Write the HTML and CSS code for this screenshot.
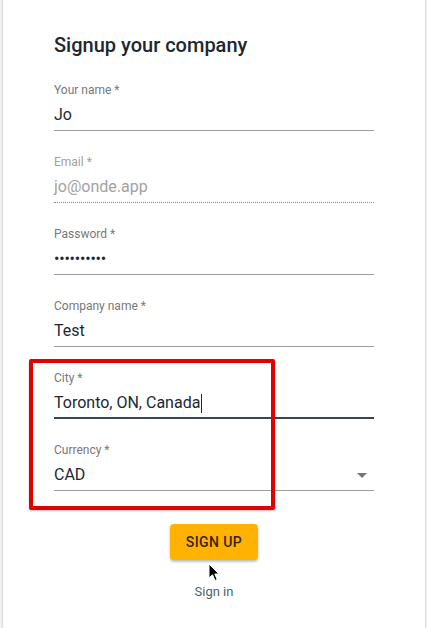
FILE: index.html
```html
<!DOCTYPE html>
<html>
<head>
<meta charset="utf-8">
<link rel="stylesheet" href="styles.css">
</head>
<body>
<div class="card">
  <form class="form">
    <h1 class="title">Signup your company</h1>
    <div class="field">
      <div class="label">Your name *</div>
      <div class="input">Jo</div>
    </div>
    <div class="field field-disabled">
      <div class="label">Email *</div>
      <div class="input">jo@onde.app</div>
    </div>
    <div class="field">
      <div class="label">Password *</div>
      <div class="input input-pass">••••••••••</div>
    </div>
    <div class="field">
      <div class="label">Company name *</div>
      <div class="input">Test</div>
    </div>
    <div class="field field-focused">
      <div class="label">City *</div>
      <div class="input">Toronto, ON, Canada<span class="caret"></span></div>
    </div>
    <div class="field">
      <div class="label">Currency *</div>
      <div class="input input-select">CAD<span class="arrow"></span></div>
    </div>
    <div class="actions">
      <button type="button" class="btn">SIGN UP</button>
      <a class="link">Sign in</a>
    </div>
  </form>
  <div class="highlight"></div>
  <svg class="pointer" width="12" height="19" viewBox="0 0 12 19"><path d="M1 1 L1 15 L4.5 11.8 L7 17.5 L9.2 16.5 L6.8 11 L11 11 Z" fill="#000" stroke="#fff" stroke-width="1"/></svg>
</div>
</body>
</html>
```

FILE: styles.css
```css
* { box-sizing: border-box; }
html, body { margin: 0; padding: 0; }
body {
  background: #f1f1f1;
  font-family: Roboto, "Liberation Sans", sans-serif;
  width: 427px;
  height: 628px;
  overflow: hidden;
}
.card {
  position: relative;
  margin-left: 2px;
  width: 424px;
  height: 628px;
  background: #fff;
  border-left: 1px solid #dcdcdc;
  border-right: 1px solid #dcdcdc;
}
.form {
  width: 320px;
  margin: 0 auto;
  padding-top: 33px;
  display: flex;
  flex-direction: column;
}
.title {
  margin: 0 0 26px;
  font-size: 20px;
  line-height: 24px;
  font-weight: 500;
  color: #1d2731;
}
.field {
  display: flex;
  flex-direction: column;
  margin-bottom: 24px;
}
.label {
  font-size: 12px;
  line-height: 14px;
  color: #787878;
  margin-bottom: 6px;
}
.input {
  font-size: 16px;
  line-height: 24px;
  color: #1d2731;
  padding-bottom: 3px;
  border-bottom: 1px solid #9e9e9e;
  display: flex;
  align-items: center;
}
.field-disabled .label { color: #a0a0a0; }
.field-disabled .input {
  color: #a2a2a2;
  border-bottom: 1px dotted #8a8a8a;
}
.input-pass {
  font-size: 16px;
  letter-spacing: -0.2px;
}
.field-focused .input {
  padding-bottom: 2px;
  border-bottom: 2px solid #37474f;
}
.caret {
  display: inline-block;
  width: 1px;
  height: 19px;
  background: #1d2731;
  margin-left: 1px;
}
.input-select { justify-content: space-between; }
.arrow {
  width: 0;
  height: 0;
  margin-right: 7px;
  border-left: 5px solid transparent;
  border-right: 5px solid transparent;
  border-top: 5px solid #757575;
}
.actions {
  display: flex;
  flex-direction: column;
  align-items: center;
  margin-top: 9px;
}
.btn {
  width: 88px;
  height: 36px;
  border: none;
  border-radius: 4px;
  background: #ffb300;
  color: #3a2300;
  font-family: Roboto, "Liberation Sans", sans-serif;
  font-size: 14px;
  font-weight: 500;
  letter-spacing: 0.4px;
  box-shadow: 0 2px 2px rgba(0,0,0,0.18), 0 1px 4px rgba(0,0,0,0.1);
  padding: 0;
}
.link {
  margin-top: 24px;
  font-size: 13px;
  line-height: 16px;
  color: #4c6272;
}
.highlight {
  position: absolute;
  left: 26px;
  top: 359px;
  width: 246px;
  height: 151px;
  border: 4px solid #e30000;
  border-radius: 2px;
  box-shadow: 0 1px 2px rgba(0,0,0,0.25);
}
.pointer {
  position: absolute;
  left: 205px;
  top: 563px;
}
```
